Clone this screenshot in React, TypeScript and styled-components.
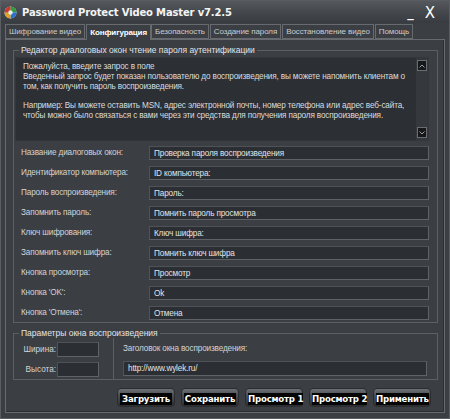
import * as React from "react";
import styled, { createGlobalStyle } from "styled-components";

const Global = createGlobalStyle`
  html, body { margin: 0; padding: 0; background: #3b3e43; }
  * { box-sizing: border-box; }
`;

const Window = styled.div`
  width: 450px;
  height: 419px;
  display: flex;
  flex-direction: column;
  background: #3b3e43;
  border: 1px solid #5a5e63;
  font-family: "Liberation Sans", Arial, sans-serif;
  font-size: 8px;
  color: #d4d6d8;
  overflow: hidden;
`;

const TitleBar = styled.div`
  height: 22px;
  flex-shrink: 0;
  display: flex;
  align-items: center;
  padding: 0 14px 0 3px;
  gap: 5px;
  background: linear-gradient(180deg, #55585d 0%, #43464b 55%, #383b40 100%);
`;

const Title = styled.div`
  flex: 1;
  color: #f4f4f4;
  font-family: "DejaVu Sans", sans-serif;
  font-weight: bold;
  font-size: 10px;
  letter-spacing: -0.15px;
  padding-top: 1px;
`;

const Control = styled.span<{ $big?: boolean }>`
  color: #ffffff;
  font-family: "DejaVu Sans", sans-serif;
  font-size: ${(p) => (p.$big ? "15px" : "13px")};
  font-weight: ${(p) => (p.$big ? "normal" : "bold")};
  line-height: 1;
  margin-left: 6px;
  padding-top: ${(p) => (p.$big ? "2px" : "0")};
`;

const TabStrip = styled.div`
  display: flex;
  flex-shrink: 0;
  align-items: flex-end;
  height: 16px;
  padding-left: 4px;
`;

const Tab = styled.div<{ $active?: boolean }>`
  height: ${(p) => (p.$active ? "16px" : "15px")};
  padding: 0 3px;
  display: flex;
  align-items: center;
  border: 1px solid #676b70;
  border-bottom: ${(p) => (p.$active ? "none" : "1px solid #676b70")};
  margin-right: ${(p) => (p.$active ? "0" : "1px")};
  color: ${(p) => (p.$active ? "#ffffff" : "#c9cbcd")};
  font-size: 8px;
  letter-spacing: -0.1px;
  font-weight: ${(p) => (p.$active ? "bold" : "normal")};
  background: #3b3e43;
  white-space: nowrap;
  position: relative;
  z-index: 1;
  margin-bottom: ${(p) => (p.$active ? "-1px" : "0")};
`;

const Panel = styled.div`
  flex: 1;
  min-height: 0;
  margin: 0 4px 5px 4px;
  border: 1px solid #676b70;
  box-shadow: inset -1px -1px 0 #2c2e32;
  padding: 5px 6px 0 7px;
  display: flex;
  flex-direction: column;
`;

const Group = styled.fieldset<{ $second?: boolean }>`
  flex-shrink: 0;
  margin: ${(p) => (p.$second ? "5px 0 0" : "0")};
  border: 1px solid #5c6065;
  padding: ${(p) => (p.$second ? "0 8px 0 1px" : "2px 8px 2px 1px")};
  min-width: 0;
`;

const Legend = styled.legend`
  font-size: 8.5px;
  line-height: 10px;
  padding: 0 2px;
  margin-left: 4px;
  color: #e2e4e6;
`;

const Memo = styled.div`
  height: 84px;
  background: #2c2f33;
  border: 1px solid #33363a;
  display: flex;
  margin-bottom: 5px;
`;

const MemoText = styled.div`
  flex: 1;
  padding: 4px 6px 0 7px;
  font-size: 8.2px;
  line-height: 9.8px;
  color: #dadcde;
  white-space: pre-line;
  letter-spacing: -0.15px;
`;

const ScrollBar = styled.div`
  width: 12px;
  display: flex;
  flex-direction: column;
  justify-content: space-between;
  align-items: center;
  padding: 2px 0 2px;
  background: #35383c;
`;

const Arrow = styled.div`
  width: 10px;
  height: 11px;
  background: #17181a;
  border: 1px solid #6a6e73;
  display: flex;
  align-items: center;
  justify-content: center;
`;

const Rows = styled.div`
  display: flex;
  flex-direction: column;
  gap: 6px;
`;

const Row = styled.div`
  display: grid;
  grid-template-columns: 134px 1fr;
  align-items: center;
`;

const Label = styled.div<{ $flush?: boolean }>`
  padding-left: ${(p) => (p.$flush ? "0" : "6px")};
  font-size: 8.2px;
  line-height: 10px;
  letter-spacing: -0.15px;
  color: #d2d4d6;
  white-space: nowrap;
`;

const Field = styled.div<{ $w?: number; $h?: number }>`
  height: ${(p) => p.$h ?? 14}px;
  width: ${(p) => (p.$w ? `${p.$w}px` : "auto")};
  background: #2b2e32;
  border: 1px solid #4f5358;
  border-right-color: #5f6368;
  border-bottom-color: #5f6368;
  padding-left: 4px;
  display: flex;
  align-items: center;
  font-size: 8.2px;
  letter-spacing: -0.15px;
  color: #e2e4e6;
  white-space: nowrap;
  overflow: hidden;
`;

const Params = styled.div`
  display: grid;
  grid-template-columns: 99px 1fr;
  height: 41px;
`;

const SizeCol = styled.div`
  border-right: 1px solid #5c6065;
  display: flex;
  flex-direction: column;
  gap: 5px;
  padding-top: 4px;
`;

const SizeRow = styled.div`
  display: grid;
  grid-template-columns: 42px 42px;
  align-items: center;
`;

const SizeLabel = styled.div`
  text-align: right;
  font-size: 8.2px;
  color: #d2d4d6;
  padding-right: 1px;
`;

const TitleCol = styled.div`
  display: flex;
  flex-direction: column;
  padding: 6px 2px 0 9px;
  gap: 7px;
`;

const Buttons = styled.div`
  display: flex;
  flex-shrink: 0;
  justify-content: flex-end;
  gap: 6px;
  padding: 8px 7px 0 0;
`;

const Btn = styled.div`
  width: 58px;
  height: 19px;
  border-radius: 4px;
  padding: 6px 2px 1px;
  background: linear-gradient(180deg, #6e7278 0%, #4d5055 35%, #2c2e31 100%);
  border: 1px solid #2a2c2f;
  display: flex;
`;

const BtnFace = styled.div`
  flex: 1;
  background: #050505;
  color: #ffffff;
  font-family: "DejaVu Sans", sans-serif;
  font-weight: bold;
  font-size: 8.6px;
  letter-spacing: -0.2px;
  display: flex;
  align-items: center;
  justify-content: center;
  white-space: nowrap;
  margin-top: -2px;
`;

const AppIcon = () => (
  <svg width="13" height="13" viewBox="0 0 13 13">
    <circle cx="6.5" cy="6.5" r="6" fill="#d9dde2" />
    <path d="M6.5 6.5 L6.5 0.5 A6 6 0 0 1 12.5 6.5 Z" fill="#2f9a3c" />
    <path d="M6.5 6.5 L12.5 6.5 A6 6 0 0 1 6.5 12.5 Z" fill="#2c6fd1" />
    <path d="M6.5 6.5 L6.5 12.5 A6 6 0 0 1 0.5 6.5 Z" fill="#d8a326" />
    <path d="M6.5 6.5 L0.5 6.5 A6 6 0 0 1 6.5 0.5 Z" fill="#c73b2e" />
    <circle cx="6.5" cy="6.5" r="2.2" fill="#e8ebee" />
  </svg>
);

const ArrowIcon = ({ up }: { up?: boolean }) => (
  <svg width="6" height="4" viewBox="0 0 6 4">
    <path
      d={up ? "M0.5 3.5 L3 1 L5.5 3.5" : "M0.5 0.5 L3 3 L5.5 0.5"}
      stroke="#9a9ea3"
      strokeWidth="1"
      fill="none"
    />
  </svg>
);

const tabs = [
  "Шифрование видео",
  "Конфигурация",
  "Безопасность",
  "Создание пароля",
  "Восстановление видео",
  "Помощь",
];

const rows: [string, string][] = [
  ["Название диалоговых окон:", "Проверка пароля воспроизведения"],
  ["Идентификатор компьютера:", "ID компьютера:"],
  ["Пароль воспроизведения:", "Пароль:"],
  ["Запомнить пароль:", "Помнить пароль просмотра"],
  ["Ключ шифрования:", "Ключ шифра:"],
  ["Запомнить ключ шифра:", "Помнить ключ шифра"],
  ["Кнопка просмотра:", "Просмотр"],
  ["Кнопка 'OK':", "Ok"],
  ["Кнопка 'Отмена':", "Отмена"],
];

const memo = `Пожалуйста, введите запрос в поле
Введенный запрос будет показан пользователю до воспроизведения, вы можете напомнить клиентам о
том, как получить пароль воспроизведения.

Например: Вы можете оставить MSN, адрес электронной почты, номер телефона или адрес веб-сайта,
чтобы можно было связаться с вами через эти средства для получения пароля воспроизведения.`;

const buttons = ["Загрузить", "Сохранить", "Просмотр 1", "Просмотр 2", "Применить"];

export default function App() {
  return (
    <>
      <Global />
      <Window>
        <TitleBar>
          <AppIcon />
          <Title>Password Protect Video Master v7.2.5</Title>
          <Control>_</Control>
          <Control $big>X</Control>
        </TitleBar>
        <TabStrip>
          {tabs.map((t, i) => (
            <Tab key={t} $active={i === 1}>
              {t}
            </Tab>
          ))}
        </TabStrip>
        <Panel>
          <Group>
            <Legend>Редактор диалоговых окон чтение пароля аутентификации</Legend>
            <Memo>
              <MemoText>{memo}</MemoText>
              <ScrollBar>
                <Arrow>
                  <ArrowIcon up />
                </Arrow>
                <Arrow>
                  <ArrowIcon />
                </Arrow>
              </ScrollBar>
            </Memo>
            <Rows>
              {rows.map(([label, value]) => (
                <Row key={label}>
                  <Label>{label}</Label>
                  <Field>{value}</Field>
                </Row>
              ))}
            </Rows>
          </Group>
          <Group $second>
            <Legend>Параметры окна воспроизведения</Legend>
            <Params>
              <SizeCol>
                <SizeRow>
                  <SizeLabel>Ширина:</SizeLabel>
                  <Field $w={42} $h={15} />
                </SizeRow>
                <SizeRow>
                  <SizeLabel>Высота:</SizeLabel>
                  <Field $w={42} $h={15} />
                </SizeRow>
              </SizeCol>
              <TitleCol>
                <Label $flush>Заголовок окна воспроизведения:</Label>
                <Field $h={15}>http://www.wylek.ru/</Field>
              </TitleCol>
            </Params>
          </Group>
          <Buttons>
            {buttons.map((b) => (
              <Btn key={b}>
                <BtnFace>{b}</BtnFace>
              </Btn>
            ))}
          </Buttons>
        </Panel>
      </Window>
    </>
  );
}
